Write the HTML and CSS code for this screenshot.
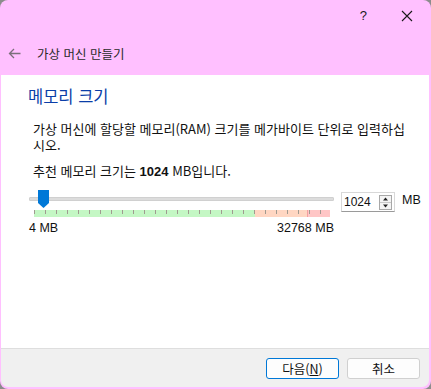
FILE: index.html
```html
<!DOCTYPE html>
<html lang="ko">
<head>
<meta charset="utf-8">
<link rel="stylesheet" href="styles.css">
</head>
<body>
<div class="window">
  <div class="titlebar">
    <span class="help">?</span>
    <svg class="close" width="12" height="12" viewBox="0 0 12 12"><path d="M1 1L11 11M11 1L1 11" stroke="#1a1a1a" stroke-width="1.1" fill="none"/></svg>
  </div>
  <div class="header">
    <svg class="back" width="13" height="11" viewBox="0 0 13 11"><path d="M12.5 5.5H1.5M6 1L1.5 5.5L6 10" stroke="#7a6f7a" stroke-width="1.3" fill="none"/></svg>
    <span class="title">가상 머신 만들기</span>
  </div>
  <div class="content">
    <h1 class="heading">메모리 크기</h1>
    <p class="desc">가상 머신에 할당할 메모리(RAM) 크기를 메가바이트 단위로 입력하십시오.</p>
    <p class="rec">추천 메모리 크기는 <b>1024</b> MB입니다.</p>
    <div class="slider-row">
      <div class="slider-col">
        <div class="slider">
          <div class="track"></div>
          <svg class="thumb" width="11" height="18" viewBox="0 0 11 18"><polygon points="0,0 11,0 11,13 5.5,18 0,13" fill="#0078d7"/></svg>
        </div>
        <div class="ticks"></div>
        <div class="labels"><span>4 MB</span><span>32768 MB</span></div>
      </div>
      <div class="spinbox">
        <span class="spin-value">1024</span>
        <span class="spin-btns">
          <svg width="13" height="15" viewBox="0 0 13 15"><rect x="0.5" y="0.5" width="12" height="14" fill="#f4f4f4" stroke="#a8a8a8"/><path d="M6.5 2.5L9 5.5H4Z" fill="#222"/><path d="M4 9.5H9L6.5 12.5Z" fill="#222"/><path d="M1 7.5H12" stroke="#c8c8c8"/></svg>
        </span>
      </div>
      <span class="unit">MB</span>
    </div>
  </div>
  <div class="footer">
    <button class="btn primary">다음(<u>N</u>)</button>
    <button class="btn">취소</button>
  </div>
</div>
</body>
</html>
```
FILE: styles.css
```css
html, body { margin: 0; padding: 0; }
body {
  background: #8c8c8c;
  font-family: "Noto Sans CJK KR", "Noto Sans", sans-serif;
  font-size: 12px;
  color: #111;
}
.window {
  width: 431px;
  height: 389px;
  background: #ffc0ff;
  border-radius: 8px;
  overflow: hidden;
  display: flex;
  flex-direction: column;
}
.titlebar {
  height: 32px;
  display: flex;
  align-items: center;
  justify-content: flex-end;
  padding-right: 18px;
  box-sizing: border-box;
}
.help {
  font-family: "Liberation Sans", sans-serif;
  font-size: 13px;
  color: #1a1a1a;
  margin-right: 34px;
  margin-top: -2px;
}
.close { margin-top: -1px; }
.header {
  height: 43px;
  display: flex;
  align-items: center;
  padding-left: 8px;
  box-sizing: border-box;
  padding-bottom: 1px;
}
.back { margin-right: 16px; }
.title { font-size: 12.5px; color: #2a2a2a; }
.content {
  flex: 1;
  background: #fff;
  margin: 0 2px 0 1px;
  padding: 10px 0 0 27px;
}
.heading {
  margin: 0;
  font-size: 16.5px;
  font-weight: normal;
  line-height: 22px;
  color: #0a3ea8;
}
.desc {
  margin: 14px 0 0 5px;
  width: 382px;
  line-height: 16px;
  font-size: 13px;
}
.rec {
  margin: 10px 0 0 5px;
  line-height: 16px;
  font-size: 13px;
}
.rec b { font-family: "Liberation Sans", sans-serif; font-weight: bold; }
.slider-row {
  display: flex;
  align-items: flex-start;
  margin-top: 10px;
  margin-left: 1px;
}
.slider-col { width: 305px; }
.slider {
  position: relative;
  height: 20px;
}
.track {
  position: relative;
  top: 7px;
  height: 2px;
  background: #dcdcdc;
  border: 1px solid #d0d0d0;
  border-radius: 1px;
}
.thumb {
  position: absolute;
  left: 9px;
  top: 0;
}
.ticks {
  margin-left: 5px;
  width: 296px;
  height: 7px;
  background:
    repeating-linear-gradient(to right, #a09a90 0 1px, transparent 1px 11px) 0 0 / 100% 4px no-repeat,
    linear-gradient(to right, #c4f7c4 0 221px, #ffd6c2 221px 273px, #f4a0a0 273px 274px, #ffc6c6 274px 296px);
}
.labels {
  display: flex;
  justify-content: space-between;
  margin-top: 3px;
  line-height: 16px;
  font-family: "Liberation Sans", sans-serif;
  font-size: 12.5px;
}
.spinbox {
  margin-left: 7px;
  margin-top: 2px;
  width: 54px;
  height: 20px;
  box-sizing: border-box;
  border: 1px solid #d8d8d8;
  border-bottom-color: #9a9a9a;
  display: flex;
  align-items: center;
  justify-content: space-between;
  padding: 0 2px 0 2px;
}
.spin-value { font-family: "Liberation Sans", sans-serif; font-size: 12px; }
.spin-btns { display: flex; }
.unit {
  margin-left: 7px;
  margin-top: 3px;
  font-family: "Liberation Sans", sans-serif;
  font-size: 12.5px;
}
.footer {
  height: 39px;
  background: #f0f0f0;
  border-top: 1px solid #dedede;
  margin: 0 2px 2px 1px;
  display: flex;
  align-items: flex-start;
  justify-content: flex-end;
  padding: 9px 9px 0 0;
  box-sizing: border-box;
  gap: 8px;
  border-radius: 0 0 7px 7px;
}
.btn {
  width: 73px;
  height: 21px;
  box-sizing: border-box;
  background: #fdfdfd;
  border: 1px solid #d0d0d0;
  border-radius: 3px;
  font-family: "Noto Sans CJK KR", sans-serif;
  font-size: 12.5px;
  color: #111;
  padding: 0;
  line-height: 18px;
}
.btn.primary { border-color: #0078d7; }
```
